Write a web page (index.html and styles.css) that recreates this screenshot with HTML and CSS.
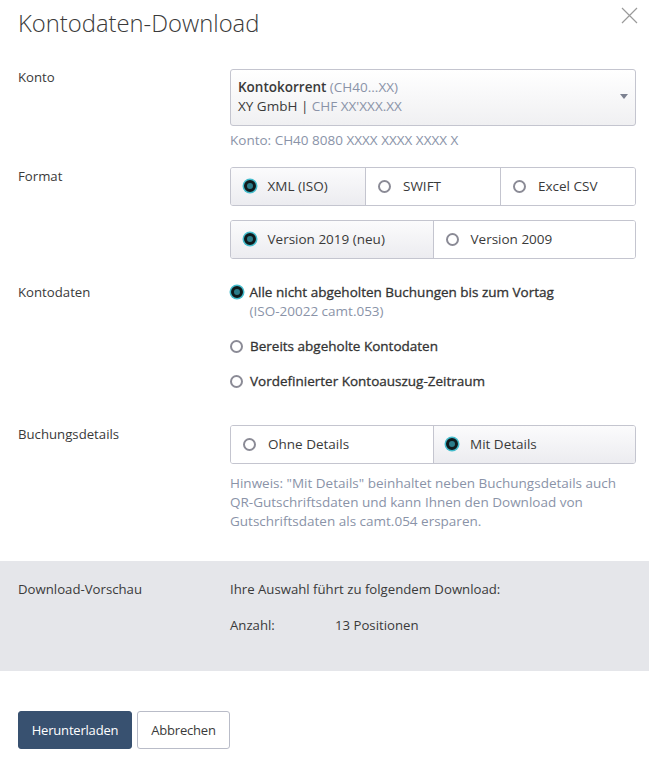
FILE: index.html
```html
<!DOCTYPE html>
<html lang="de">
<head>
<meta charset="utf-8">
<title>Kontodaten-Download</title>
<link rel="stylesheet" href="styles.css">
</head>
<body>
<div class="dialog">
  <header class="header">
    <h1 class="title">Kontodaten-Download</h1>
    <button class="close" aria-label="Schliessen">
      <svg width="17" height="17" viewBox="0 0 17 17"><path d="M1 1L16 16M16 1L1 16" stroke="#9a9a9a" stroke-width="1.2" fill="none"/></svg>
    </button>
  </header>

  <div class="form">
    <div class="row row-konto">
      <div class="label">Konto</div>
      <div class="field">
        <div class="select">
          <div class="select-text">
            <div><span class="strong">Kontokorrent</span> <span class="muted">(CH40...XX)</span></div>
            <div>XY GmbH | <span class="muted">CHF XX'XXX.XX</span></div>
          </div>
          <span class="caret"></span>
        </div>
        <div class="help">Konto: CH40 8080 XXXX XXXX XXXX X</div>
      </div>
    </div>

    <div class="row row-format">
      <div class="label">Format</div>
      <div class="field">
        <div class="segments">
          <div class="seg active"><span class="radio on"></span>XML (ISO)</div>
          <div class="seg"><span class="radio"></span>SWIFT</div>
          <div class="seg"><span class="radio"></span>Excel CSV</div>
        </div>
        <div class="segments second">
          <div class="seg active"><span class="radio on"></span>Version 2019 (neu)</div>
          <div class="seg"><span class="radio"></span>Version 2009</div>
        </div>
      </div>
    </div>

    <div class="row row-daten">
      <div class="label">Kontodaten</div>
      <div class="field options">
        <div class="option">
          <span class="radio on"></span>
          <div>
            <div class="opt">Alle nicht abgeholten Buchungen bis zum Vortag</div>
            <div class="muted">(ISO-20022 camt.053)</div>
          </div>
        </div>
        <div class="option">
          <span class="radio"></span>
          <div class="opt">Bereits abgeholte Kontodaten</div>
        </div>
        <div class="option">
          <span class="radio"></span>
          <div class="opt">Vordefinierter Kontoauszug-Zeitraum</div>
        </div>
      </div>
    </div>

    <div class="row row-details">
      <div class="label">Buchungsdetails</div>
      <div class="field">
        <div class="segments">
          <div class="seg"><span class="radio"></span>Ohne Details</div>
          <div class="seg active"><span class="radio on"></span>Mit Details</div>
        </div>
        <div class="hint">Hinweis: "Mit Details" beinhaltet neben Buchungsdetails auch QR-Gutschriftsdaten und kann Ihnen den Download von Gutschriftsdaten als camt.054 ersparen.</div>
      </div>
    </div>
  </div>

  <section class="preview">
    <div class="label">Download-Vorschau</div>
    <div class="preview-body">
      <div>Ihre Auswahl führt zu folgendem Download:</div>
      <div class="count"><span class="count-label">Anzahl:</span><span>13 Positionen</span></div>
    </div>
  </section>

  <footer class="actions">
    <button class="btn primary">Herunterladen</button>
    <button class="btn secondary">Abbrechen</button>
  </footer>
</div>
</body>
</html>
```

FILE: styles.css
```css
* { box-sizing: border-box; }
html, body { margin: 0; padding: 0; background: #fff; }
body {
  font-family: "Open Sans", "Noto Sans", "Liberation Sans", sans-serif;
  font-size: 13.5px;
  line-height: 19px;
  color: #3a3a3a;
}
.dialog { width: 649px; }
.header {
  position: relative;
  padding: 8px 18px 0 18px;
  height: 69px;
}
.title {
  margin: 0;
  font-size: 23.8px;
  font-weight: 300;
  line-height: 30px;
  color: #3a3a3a;
}
.close {
  position: absolute;
  top: 7px;
  right: 11px;
  border: 0;
  background: none;
  padding: 0;
  width: 17px;
  height: 17px;
}
.form { padding: 0 13px 0 18px; }
.row {
  display: grid;
  grid-template-columns: 212px 1fr;
}
.label {
  line-height: 16px;
  padding-top: 0;
  font-size: 13.2px;
}
.row-format { margin-top: 16.5px; }
.row-format .label { padding-top: 1px; }
.row-daten { margin-top: 24.5px; }
.row-daten .label { line-height: 19px; }
.row-details { margin-top: 33.5px; }
.row-details .label { padding-top: 1px; }

.select {
  display: flex;
  align-items: center;
  justify-content: space-between;
  height: 57px;
  border: 1px solid #c4c5cf;
  border-radius: 3px;
  background: linear-gradient(#ffffff, #f0f0f2);
  padding: 0 7px 2px 7px;
}
.strong { font-weight: 600; color: #3a3a3a; }
.muted { color: #8a93a8; }
.caret {
  width: 0; height: 0;
  border-left: 4.5px solid transparent;
  border-right: 4.5px solid transparent;
  border-top: 5px solid #7c8190;
}
.help {
  margin-top: 5px;
  color: #8a93a8;
}

.segments {
  display: flex;
  height: 39px;
  border: 1px solid #c4c5cf;
  border-radius: 3px;
  overflow: hidden;
}
.segments.second { margin-top: 14px; }
.seg {
  flex: 1;
  display: flex;
  align-items: center;
  gap: 12px;
  padding-left: 12px;
  background: #fff;
  color: #3a3a3a;
}
.seg + .seg { border-left: 1px solid #c4c5cf; }
.seg.active { background: linear-gradient(#fbfbfc, #ececf0); }

.radio {
  flex: none;
  width: 13px;
  height: 13px;
  border-radius: 50%;
  border: 2px solid #8b8b96;
  background: #fff;
}
.radio.on {
  border: 3px solid #0f1a1c;
  background: #2b7d8a;
  box-shadow: 0 0 0 1.5px #45bccc;
  width: 12px;
  height: 12px;
  margin-left: 0.5px;
}

.options {
  display: flex;
  flex-direction: column;
  gap: 16px;
}
.option {
  display: flex;
  align-items: flex-start;
  gap: 7px;
}
.option .radio { margin-top: 3px; }
.opt {
  font-weight: 500;
  color: #333;
  -webkit-text-stroke: 0.3px #333;
}

.hint {
  margin-top: 10.5px;
  color: #8a93a8;
}

.preview {
  margin-top: 29.5px;
  background: #e5e6ea;
  display: grid;
  grid-template-columns: 212px 1fr;
  padding: 19.5px 13px 35.5px 18px;
}
.preview .label { line-height: 19px; }
.preview-body { font-size: 13.2px; }
.count {
  display: flex;
  margin-top: 17px;
}
.count-label { width: 105px; }

.actions {
  display: flex;
  gap: 5px;
  padding: 40px 18px 0 18px;
}
.btn {
  font-family: inherit;
  font-size: 13px;
  letter-spacing: -0.2px;
  height: 38px;
  border-radius: 3px;
  padding: 0;
  cursor: pointer;
}
.primary {
  width: 114px;
  background: #385170;
  color: #fff;
  border: 1px solid #385170;
}
.secondary {
  width: 93px;
  background: #fff;
  color: #3a3a3a;
  border: 1px solid #b9bcc8;
}
```
